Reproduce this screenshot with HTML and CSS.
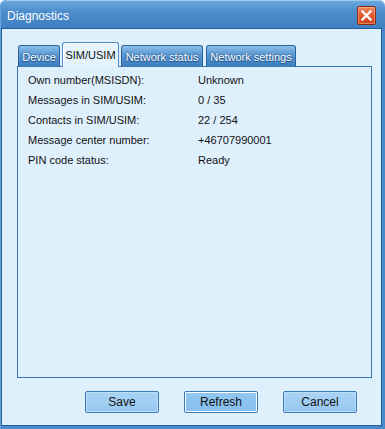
FILE: index.html
```html
<!DOCTYPE html>
<html>
<head>
<meta charset="utf-8">
<link rel="stylesheet" href="styles.css">
</head>
<body>
<div class="window">
  <div class="titlebar">
    <span class="title">Diagnostics</span>
    <button class="close" aria-label="Close">
      <svg width="11" height="11" viewBox="0 0 11 11"><path d="M1.5 1.5 L9.5 9.5 M9.5 1.5 L1.5 9.5" stroke="#fff" stroke-width="2.4" stroke-linecap="square"/></svg>
    </button>
  </div>
  <div class="client">
    <div class="tabs">
      <div class="tab tab-device">Device</div>
      <div class="tab tab-sim active">SIM/USIM</div>
      <div class="tab tab-nstatus">Network status</div>
      <div class="tab tab-nsettings">Network settings</div>
    </div>
    <div class="panel">
      <div class="row"><span class="label">Own number(MSISDN):</span><span class="value">Unknown</span></div>
      <div class="row"><span class="label">Messages in SIM/USIM:</span><span class="value">0 / 35</span></div>
      <div class="row"><span class="label">Contacts in SIM/USIM:</span><span class="value">22 / 254</span></div>
      <div class="row"><span class="label">Message center number:</span><span class="value">+46707990001</span></div>
      <div class="row"><span class="label">PIN code status:</span><span class="value">Ready</span></div>
    </div>
    <div class="buttons">
      <button class="btn">Save</button>
      <button class="btn default">Refresh</button>
      <button class="btn">Cancel</button>
    </div>
  </div>
</div>
</body>
</html>
```
FILE: styles.css
```css
html, body {
  margin: 0;
  padding: 0;
  background: #ffffff;
}
body {
  font-family: "Liberation Sans", Arial, sans-serif;
  font-size: 11px;
  color: #111;
}
.window {
  width: 385px;
  height: 429px;
  box-sizing: border-box;
  display: flex;
  flex-direction: column;
  padding: 0 3px 3px 1px;
  border-radius: 6px 6px 0 0;
  background: linear-gradient(to bottom, #6eaae0 0px, #4c8ccc 12px, #3f80c2 28px, #4a8acb 29px, #4a8acb 100%);
  box-shadow: inset 1px 0 0 #6aa6de, inset 0 1px 0 #9ccaf0;
}
.titlebar {
  height: 28px;
  display: flex;
  align-items: center;
  justify-content: space-between;
  padding: 0 6px 0 6px;
  flex: none;
}
.title {
  color: #fff;
  font-size: 12px;
  padding-top: 4px;
}
.close {
  width: 19px;
  height: 19px;
  margin-top: 3px;
  padding: 0;
  border: 1px solid #8a2a12;
  border-radius: 2px;
  background: linear-gradient(to bottom, #f08a62 0%, #e2582c 45%, #d0441c 100%);
  box-shadow: inset 0 0 0 1px rgba(255,200,170,0.5);
  display: flex;
  align-items: center;
  justify-content: center;
}
.client {
  flex: 1;
  display: flex;
  flex-direction: column;
  background: #dff0fd;
  border: 1px solid #1f5d9e;
  padding: 14px 9px 0 15px;
}
.tabs {
  display: flex;
  align-items: flex-end;
  height: 24px;
  padding-left: 1px;
  margin-bottom: -1px;
  position: relative;
  z-index: 1;
}
.tab {
  height: 22px;
  box-sizing: border-box;
  margin-right: 2px;
  border: 1px solid #2a629e;
  border-bottom: none;
  border-radius: 3px 3px 0 0;
  background: linear-gradient(to bottom, #8ec0ea 0%, #5a98d2 40%, #3c7cbe 100%);
  color: #fff;
  text-shadow: 0 0 2px #1d4f86, 0 1px 1px #1d4f86;
  display: flex;
  align-items: center;
  justify-content: center;
  padding-top: 1px;
}
.tab-device { width: 42px; }
.tab-sim { width: 57px; }
.tab-nstatus { width: 82px; margin-right: 3px; }
.tab-nsettings { width: 90px; }
.tab.active {
  height: 25px;
  background: #e4f3fe;
  border-color: #4c8ac8;
  color: #111;
  text-shadow: none;
  padding-top: 0;
  padding-bottom: 1px;
  box-shadow: inset 1px 1px 0 #ffffff;
}
.panel {
  height: 312px;
  box-sizing: border-box;
  border: 1px solid #3d77b4;
  background: #dff0fd;
  padding: 3px 0 0 10px;
}
.row {
  display: flex;
  height: 20px;
  align-items: center;
}
.label {
  width: 170px;
}
.buttons {
  display: flex;
  justify-content: flex-end;
  gap: 25px;
  padding: 13px 15px 0 0;
}
.btn {
  width: 74px;
  height: 22px;
  padding: 0;
  font-family: "Liberation Sans", Arial, sans-serif;
  font-size: 12px;
  color: #111;
  border: 1px solid #3b79b8;
  border-radius: 2px;
  background: linear-gradient(to bottom, #a9d3f4 0%, #a0cdf2 60%, #93c4ee 100%);
  box-shadow: inset 0 0 0 1px #bde0f8;
}
.btn.default {
  background: linear-gradient(to bottom, #92c8f2 0%, #86c0ef 100%);
  box-shadow: inset 0 0 0 1px #ffffff;
}
```
